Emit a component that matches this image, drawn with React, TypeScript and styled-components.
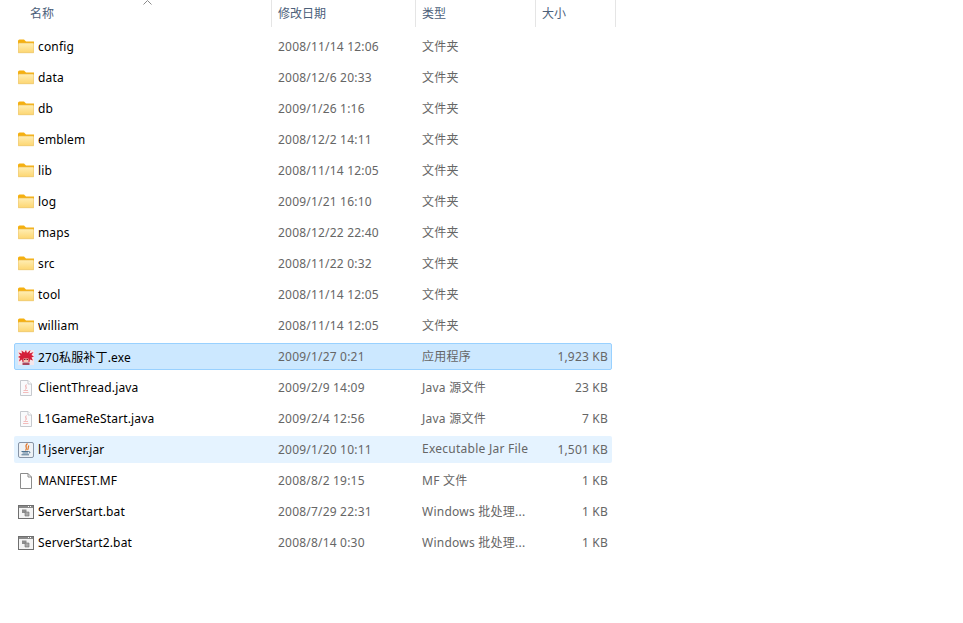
import React from 'react'
import styled, { createGlobalStyle } from 'styled-components'

const GlobalStyle = createGlobalStyle`
  html, body {
    margin: 0;
    background: #fff;
    font-family: "Noto Sans", "Noto Sans CJK SC", sans-serif;
    font-size: 12px;
  }
`

const Page = styled.div`
  width: 963px;
  height: 623px;
  overflow: hidden;
`

const Header = styled.div`
  position: relative;
  display: flex;
  height: 27px;
  margin-bottom: 6px;
`

const HeaderCell = styled.div<{ $width: number; $pad: number }>`
  box-sizing: border-box;
  width: ${(p) => p.$width}px;
  padding-left: ${(p) => p.$pad}px;
  border-right: 1px solid #e5e5e5;
  color: #4c607a;
  line-height: 28px;
`

const SortArrow = styled.svg`
  position: absolute;
  left: 143px;
  top: 0;
`

const List = styled.div`
  display: flex;
  flex-direction: column;
  gap: 4px;
  margin-left: 14px;
  width: 598px;
`

const Row = styled.div<{ $state?: 'selected' | 'hover' }>`
  box-sizing: border-box;
  display: grid;
  grid-template-columns: 257px 144px 120px 72px;
  align-items: center;
  height: 27px;
  border-radius: 2px;
  border: 1px solid
    ${(p) => (p.$state === 'selected' ? '#99d1ff' : 'transparent')};
  background: ${(p) =>
    p.$state === 'selected'
      ? '#cce8ff'
      : p.$state === 'hover'
        ? '#e5f3ff'
        : 'transparent'};
`

const NameCell = styled.div`
  display: flex;
  align-items: center;
  gap: 4px;
  padding-left: 3px;
  color: #000;
  letter-spacing: 0.15px;
  white-space: nowrap;
`

const IconBox = styled.svg`
  flex: none;
  width: 16px;
  height: 16px;
`

const DateCell = styled.div`
  padding-left: 6px;
  color: #666;
  letter-spacing: 0.2px;
  white-space: nowrap;
`

const KindCell = styled.div`
  padding: 0 0 2px 6px;
  color: #666;
  letter-spacing: 0.25px;
  white-space: nowrap;
`

const SizeCell = styled.div`
  color: #666;
  letter-spacing: 0.2px;
  text-align: right;
  white-space: nowrap;
`

const FolderIcon = () => (
  <IconBox viewBox="0 0 16 16">
    <defs>
      <linearGradient id="folderBody" x1="0" y1="0" x2="0" y2="1">
        <stop offset="0" stopColor="#ffeeb4" />
        <stop offset="1" stopColor="#fdd671" />
      </linearGradient>
    </defs>
    <path d="M0 2 Q0 0.5 1.5 0.5 H6 L8 2.5 H16 V5 H0 Z" fill="#f5b010" />
    <path d="M0.3 4 H15.7 V13.7 H0.3 Z" fill="url(#folderBody)" stroke="#e9bb4e" strokeWidth="0.6" />
  </IconBox>
)

const JavaIcon = () => (
  <IconBox viewBox="0 0 16 16">
    <path d="M2.5 0.5 H10 L13.5 4 V15.5 H2.5 Z" fill="#f9fafc" stroke="#c6c9ce" />
    <path d="M10 0.5 V4 H13.5" fill="#fff" stroke="#c6c9ce" />
    <path d="M8.3 4.5 C6.5 6.5 9.5 7.5 7.5 9.5" fill="none" stroke="#eda0a0" />
    <path d="M5.5 10.5 H10 M5 12.5 H10.5" stroke="#f3bcbc" />
  </IconBox>
)

const JarIcon = () => (
  <IconBox viewBox="0 0 16 16">
    <rect x="0.5" y="0.5" width="15" height="15" rx="1.5" fill="#eef2f6" stroke="#8794a6" />
    <path d="M9.5 1.5 C5.5 4.5 10.5 5.5 7.5 8.5 M11 3.5 C9.5 5 11 6.5 9.5 8" fill="none" stroke="#e0762a" strokeWidth="1.2" />
    <path d="M3.5 9.5 H10.5 M4.5 11 H10 M3.5 12.8 H11" stroke="#4f7390" strokeWidth="1" />
    <path d="M10.5 9.5 Q13.5 9.8 11 11.5" fill="none" stroke="#4f7390" />
  </IconBox>
)

const BlankIcon = () => (
  <IconBox viewBox="0 0 16 16">
    <path d="M2.5 0.5 H10 L13.5 4 V15.5 H2.5 Z" fill="#fff" stroke="#8c8c8c" />
    <path d="M10 0.5 V4 H13.5" fill="none" stroke="#8c8c8c" />
  </IconBox>
)

const BatIcon = () => (
  <IconBox viewBox="0 0 16 16">
    <rect x="0.5" y="1.5" width="15" height="13" fill="#f4f4f4" stroke="#6f6f6f" />
    <path d="M1 2 H15 V4 H1 Z" fill="#8a8a8a" />
    <path d="M10 2.5 H11 M12 2.5 H13" stroke="#fff" />
    <path d="M4 5.5 H8.5 V9 H4 Z" fill="#8d8d8d" />
    <path d="M7 8 H11 V12 H7 Z" fill="#a9a9a9" stroke="#6f6f6f" strokeWidth="0.6" />
  </IconBox>
)

const ExeIcon = () => (
  <IconBox viewBox="0 0 16 16">
    <rect y="1" width="16" height="15" fill="#f4e6ea" />
    <path
      d="M8 1 L9 4 L12.5 1 L11.5 4.5 L15.5 3 L13.5 6 L16 7.5 L13.5 8.5 L15 11.5 L12 10.5 L11.5 13 H4.5 L4 10.5 L1 12.5 L2 9 L0 8 L2.5 6.5 L0.5 3.5 L4 4.5 L3.5 1.5 L6.5 3.5 Z"
      fill="#d4203a"
    />
    <path d="M5.5 9.5 H10.5 V13 H5.5 Z" fill="#f2c9b8" />
    <path d="M6 10.5 H7.5 M8.5 10.5 H10" stroke="#7a2030" />
    <path d="M4.5 13.5 H11.5 V16 H4.5 Z" fill="#a8455c" />
  </IconBox>
)

type Item = {
  icon: React.ReactNode
  name: string
  date: string
  kind: string
  size?: string
  state?: 'selected' | 'hover'
}

const folders: [string, string][] = [
  ['config', '2008/11/14 12:06'],
  ['data', '2008/12/6 20:33'],
  ['db', '2009/1/26 1:16'],
  ['emblem', '2008/12/2 14:11'],
  ['lib', '2008/11/14 12:05'],
  ['log', '2009/1/21 16:10'],
  ['maps', '2008/12/22 22:40'],
  ['src', '2008/11/22 0:32'],
  ['tool', '2008/11/14 12:05'],
  ['william', '2008/11/14 12:05'],
]

const items: Item[] = [
  ...folders.map(([name, date]) => ({
    icon: <FolderIcon />,
    name,
    date,
    kind: '文件夹',
  })),
  { icon: <ExeIcon />, name: '270私服补丁.exe', date: '2009/1/27 0:21', kind: '应用程序', size: '1,923 KB', state: 'selected' },
  { icon: <JavaIcon />, name: 'ClientThread.java', date: '2009/2/9 14:09', kind: 'Java 源文件', size: '23 KB' },
  { icon: <JavaIcon />, name: 'L1GameReStart.java', date: '2009/2/4 12:56', kind: 'Java 源文件', size: '7 KB' },
  { icon: <JarIcon />, name: 'l1jserver.jar', date: '2009/1/20 10:11', kind: 'Executable Jar File', size: '1,501 KB', state: 'hover' },
  { icon: <BlankIcon />, name: 'MANIFEST.MF', date: '2008/8/2 19:15', kind: 'MF 文件', size: '1 KB' },
  { icon: <BatIcon />, name: 'ServerStart.bat', date: '2008/7/29 22:31', kind: 'Windows 批处理...', size: '1 KB' },
  { icon: <BatIcon />, name: 'ServerStart2.bat', date: '2008/8/14 0:30', kind: 'Windows 批处理...', size: '1 KB' },
]

const App: React.FC = () => (
  <Page>
    <GlobalStyle />
    <Header>
      <HeaderCell $width={272} $pad={30}>名称</HeaderCell>
      <HeaderCell $width={144} $pad={6}>修改日期</HeaderCell>
      <HeaderCell $width={120} $pad={6}>类型</HeaderCell>
      <HeaderCell $width={80} $pad={6}>大小</HeaderCell>
      <SortArrow width="9" height="5" viewBox="0 0 9 5">
        <path d="M0.5 4.5 L4.5 0.5 L8.5 4.5" fill="none" stroke="#8a8a8a" />
      </SortArrow>
    </Header>
    <List>
      {items.map((item) => (
        <Row key={item.name} $state={item.state}>
          <NameCell>
            {item.icon}
            {item.name}
          </NameCell>
          <DateCell>{item.date}</DateCell>
          <KindCell>{item.kind}</KindCell>
          <SizeCell>{item.size}</SizeCell>
        </Row>
      ))}
    </List>
  </Page>
)

export default App
